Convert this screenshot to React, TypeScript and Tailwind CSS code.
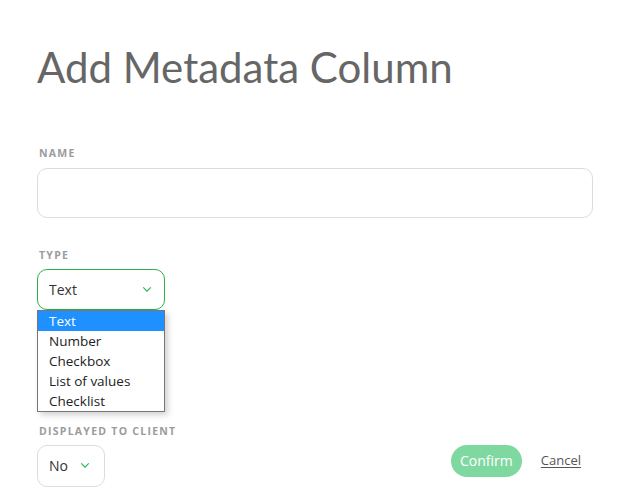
import React from 'react';

const Chevron: React.FC<{ className?: string }> = ({ className }) => (
    <svg viewBox="0 0 12 8" className={className} fill="none" stroke="currentColor" strokeWidth="1.3">
        <path d="M1.5 1.5 L6 6 L10.5 1.5" />
    </svg>
);

const Label: React.FC<{ children: React.ReactNode }> = ({ children }) => (
    <div className="text-[10.5px] font-bold tracking-[0.12em] text-[#9b9b9b] leading-none pl-[2px]">
        {children}
    </div>
);

const options = ['Text', 'Number', 'Checkbox', 'List of values', 'Checklist'];

const App: React.FC = () => {
    return (
        <div className="w-[630px] h-[499px] bg-white overflow-hidden pl-[37px] pr-[37px] pt-[42px]" style={{ fontFamily: '"Open Sans", "Noto Sans", sans-serif' }}>
            <h1 className="text-[42px] leading-[50px] text-[#666666] font-normal" style={{ fontFamily: 'Lato, sans-serif' }}>
                Add Metadata Column
            </h1>

            <div className="mt-[56px]">
                <Label>NAME</Label>
                <div className="mt-[9px] h-[50px] w-[556px] rounded-[10px] border border-[#dcdcdc] bg-white" />
            </div>

            <div className="mt-[32px]">
                <Label>TYPE</Label>
                <div className="relative mt-[9px] w-[128px]">
                    <div className="h-[41px] rounded-[10px] border border-[#2bb34a] bg-white flex items-center justify-between pl-[11px] pr-[12px] text-[14px] text-[#333]">
                        <span>Text</span>
                        <Chevron className="w-[10px] h-[7px] text-[#2bb34a]" />
                    </div>
                    <div className="absolute left-0 top-[41px] w-[128px] border border-[#767676] bg-white shadow-[3px_3px_6px_rgba(0,0,0,0.18)] text-[13.5px] leading-[20px] text-[#222]">
                        {options.map((o, i) => (
                            <div key={o} className={i === 0 ? 'bg-[#1e90ff] text-white pl-[11px]' : 'pl-[11px]'}>
                                {o}
                            </div>
                        ))}
                    </div>
                </div>
            </div>

            <div className="mt-[116px] flex items-end justify-between">
                <div>
                    <Label>DISPLAYED TO CLIENT</Label>
                    <div className="mt-[8px] h-[42px] w-[68px] rounded-[10px] border border-[#dcdcdc] bg-white flex items-center pl-[11px] gap-[12px] text-[14px] text-[#333]">
                        <span>No</span>
                        <Chevron className="w-[10px] h-[7px] text-[#2bb34a]" />
                    </div>
                </div>
                <div className="flex items-center gap-[19px] mb-[10px] mr-[12px]">
                    <button className="h-[32px] px-[9px] rounded-full bg-[#80d8a1] text-white text-[14px]">
                        Confirm
                    </button>
                    <a className="text-[13px] text-[#555] underline underline-offset-2 cursor-pointer">Cancel</a>
                </div>
            </div>
        </div>
    );
};

export default App;
